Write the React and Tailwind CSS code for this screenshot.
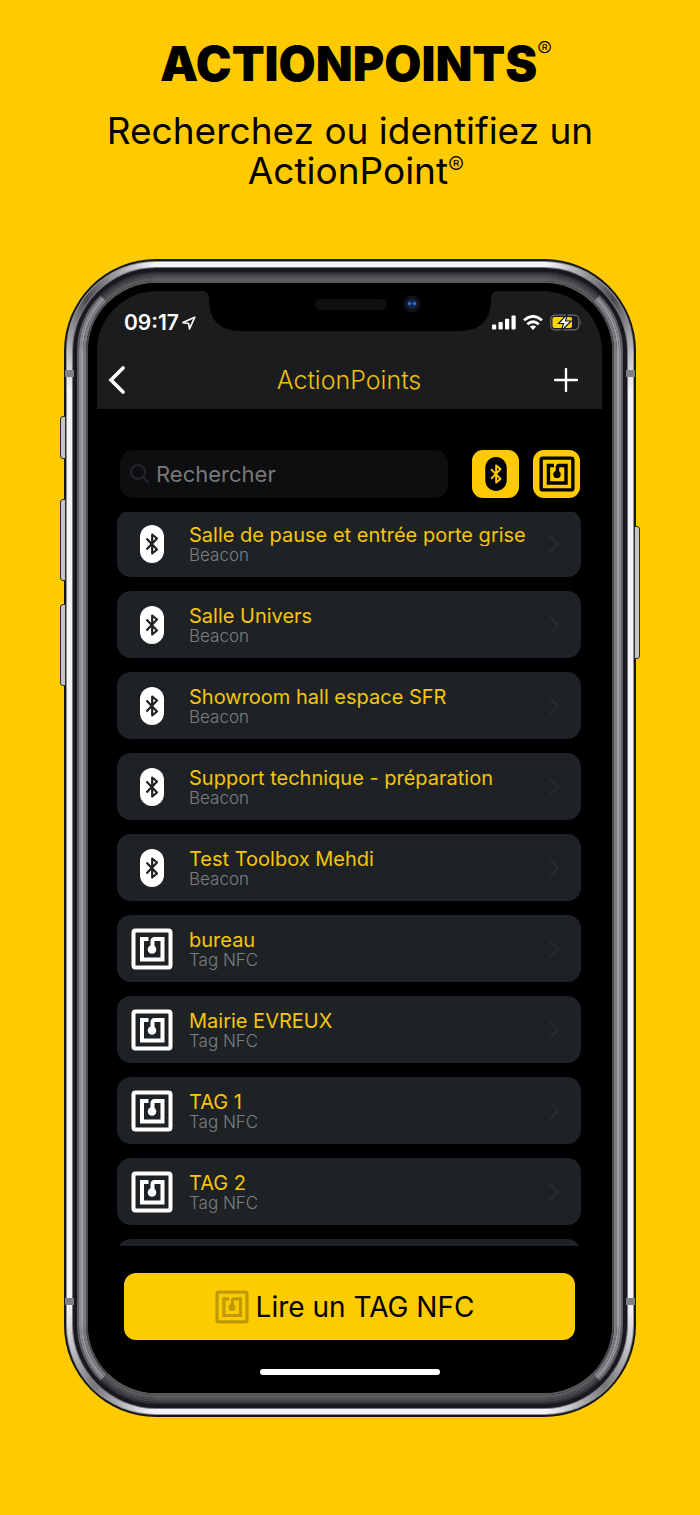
import React, { useState } from 'react';

const points = [
  { name: 'Salle de pause et entrée porte grise', type: 'Beacon' },
  { name: 'Salle Univers', type: 'Beacon' },
  { name: 'Showroom hall espace SFR', type: 'Beacon' },
  { name: 'Support technique - préparation', type: 'Beacon' },
  { name: 'Test Toolbox Mehdi', type: 'Beacon' },
  { name: 'bureau', type: 'Tag NFC' },
  { name: 'Mairie EVREUX', type: 'Tag NFC' },
  { name: 'TAG 1', type: 'Tag NFC' },
  { name: 'TAG 2', type: 'Tag NFC' },
];

// Metal and glass rings of the phone, from the outside in
const rings = [
  'p-[2px] bg-[#17171a] rounded-[92px]',
  'p-[1px] bg-[#8f9094] rounded-[90px]',
  'p-[5px] rounded-[89px] bg-[conic-gradient(#f4f4f6_0deg_19deg,#4a4a4d_26deg,#f4f4f6_32deg_149deg,#77777a_155deg,#f4f4f6_161deg_199deg,#77777a_205deg,#f4f4f6_211deg_328deg,#4a4a4d_334deg,#f4f4f6_341deg)]',
  'p-[1px] bg-[#77787c] rounded-[84px]',
  'p-[4px] bg-[#18191c] rounded-[83px]',
  'border-2 border-x-[#5d5e61] border-y-[#303134] rounded-[79px]',
  'border-2 border-x-[#8a8b8e] border-y-[#424346] rounded-[77px]',
  'border-2 border-x-[#9b9c9f] border-y-[#4e4f52] rounded-[75px]',
  'border-3 border-x-[#7b7c7f] border-y-[#5a5b5d] rounded-[73px]',
  'border-2 border-x-[#4c4d50] border-y-[#58595b] rounded-[70px]',
  'py-[8px] pr-[10px] pl-[9px] bg-black rounded-[68px]',
];

const BeaconIcon = ({ className, glyph }) => (
  <svg viewBox="0 0 24 38" className={className} aria-hidden="true">
    <rect width="24" height="38" rx="12" fill="currentColor" />
    <path d="M6.500 13.500 17 24.500 12.200 28.500V9.500l4.800 4L6.500 24.500" fill="none" stroke={glyph} strokeWidth="2.200" strokeLinejoin="round" />
  </svg>
);

const NfcIcon = ({ className }) => (
  <svg viewBox="0 0 42 42" className={className} fill="none" stroke="currentColor" aria-hidden="true">
    <rect x="2.500" y="2.500" width="37" height="37" rx="2" strokeWidth="4" />
    <path d="M17.500 11H11v20.500h20.500V11h-8q-2 0-2 2.500v7" strokeWidth="4" />
    <circle cx="21" cy="21.500" r="4.300" fill="currentColor" stroke="none" />
  </svg>
);

const PhoneFrame = ({ children }) =>
  rings.reduceRight((inner, ring) => <div className={ring}>{inner}</div>, children);

const StatusBar = () => (
  <div className="flex h-[61px] items-center justify-between pt-[2px] pr-[20px] pl-[27px] text-white">
    <div className="flex items-center gap-[3px]">
      <span className="text-[21px] leading-6 font-semibold">09:17</span>
      <svg viewBox="0 0 14 14" className="h-[14px] w-[14px]" fill="none" stroke="currentColor" strokeWidth="1.6" strokeLinejoin="round">
        <path d="M12.8 1.2 1 6.6l5.6.9.9 5.4z" />
      </svg>
    </div>
    <div className="flex items-center gap-[7px]">
      <svg viewBox="0 0 24 15" className="h-[15px] w-[24px]" fill="currentColor">
        <rect x="0" y="9.5" width="4.2" height="5" rx="1" />
        <rect x="6.5" y="7" width="4.2" height="7.5" rx="1" />
        <rect x="13" y="3.8" width="4.2" height="10.7" rx="1" />
        <rect x="19.5" y="0.5" width="4.2" height="14" rx="1" />
      </svg>
      <svg viewBox="0 0 20 15" className="h-[15px] w-[20px]" fill="none" stroke="currentColor" strokeWidth="2.8">
        <path d="M1 5.3q9-7.8 18 0M4.3 9.200q5.700-4.800 11.400 0" />
        <path d="M6.800 11.600q3.200-2.400 6.400 0L10 15z" fill="currentColor" stroke="none" />
      </svg>
      <svg viewBox="0 0 32 17" className="h-[17px] w-[32px]">
        <rect x="0.7" y="1.2" width="28" height="14.6" rx="4" fill="none" stroke="#696a6c" strokeWidth="1.2" />
        <path d="M30.300 6v5q2-2.500 0-5" fill="#696a6c" />
        <rect x="2.5" y="3" width="19.5" height="11" rx="2" fill="#fdd60a" />
        <path d="M17.500 0 8.500 9.500h5L11.300 17l9.700-10h-5.500z" fill="#fff" stroke="#1b1c1e" strokeWidth="1.200" />
      </svg>
    </div>
  </div>
);

const PointRow = ({ name, type }) => (
  <li>
    <button type="button" className="flex h-[67px] w-full items-center rounded-[14px] bg-[#1e2224] pr-[22px] pl-[14px] text-left">
      <span className="flex w-[42px] shrink-0 justify-center text-white">
        {type === 'Beacon' ? <BeaconIcon className="h-[38px] w-[24px]" glyph="#1e2224" /> : <NfcIcon className="h-[42px] w-[42px]" />}
      </span>
      <span className="ml-4 flex min-w-0 flex-1 flex-col">
        <span className="truncate text-[20px] leading-[22px] text-[#f5c60a]">{name}</span>
        <span className="text-[17px] leading-[18px] font-light text-[#7c7f82]">{type}</span>
      </span>
      <svg viewBox="0 0 10 18" className="h-[18px] w-[10px]" fill="none" stroke="#292c2f" strokeWidth="2">
        <path d="m1 1 8 8-8 8" />
      </svg>
    </button>
  </li>
);

const App = () => {
  const [query, setQuery] = useState('');

  const visible = points.filter((p) => p.name.toLowerCase().includes(query.toLowerCase()));

  return (
    <div className="min-h-screen bg-[#ffcb00] pb-[98px] font-['Inter',sans-serif] text-black">
      {/* Title */}
      <header className="flex h-[259px] flex-col items-center pt-[37px] text-center">
        <h1 className="pl-3 text-[48px] leading-[54px] font-black">
          ACTIONPOINTS<sup className="top-[-24px] text-[22px] leading-none font-light">®</sup>
        </h1>
        <p className="mt-[20px] text-[37px] leading-[40px]">
          Recherchez ou identifiez un
          <br />
          <span className="pl-3">
            ActionPoint<sup className="top-[-10px] text-[24px] leading-none font-light">®</sup>
          </span>
        </p>
      </header>

      {/* Phone */}
      <main className="relative mx-[64px]">
        <div className="absolute top-[157px] -left-[4px] h-[43px] w-[6px] rounded-l-[3px] border border-[#2b2b2e] bg-[#c5c5c8]" />
        <div className="absolute top-[240px] -left-[4px] h-[82px] w-[6px] rounded-l-[3px] border border-[#2b2b2e] bg-[#c5c5c8]" />
        <div className="absolute top-[345px] -left-[4px] h-[82px] w-[6px] rounded-l-[3px] border border-[#2b2b2e] bg-[#c5c5c8]" />
        <div className="absolute top-[267px] -right-[4px] h-[133px] w-[6px] rounded-r-[3px] border border-[#2b2b2e] bg-[#c5c5c8]" />

        <PhoneFrame>
          <div className="relative overflow-hidden rounded-[60px] bg-[#000002]">
            {/* Notch */}
            <svg viewBox="0 0 296 40" className="absolute top-0 left-1/2 h-[40px] w-[296px] -translate-x-1/2" aria-hidden="true">
              <path d="M0 0q7 0 7 8v4q2 28 32 28h218q30 0 32-28V8q0-8 7-8z" fill="#000" />
              <rect x="113" y="8" width="72" height="11" rx="5.5" fill="#0f0f11" />
              <circle cx="210" cy="13" r="8.5" fill="#111215" />
              <circle cx="210" cy="13" r="5" fill="#10264d" />
              <circle cx="207.5" cy="12.5" r="1.7" fill="#2f6fc0" />
              <circle cx="212.5" cy="12.5" r="1.7" fill="#2f6fc0" />
            </svg>

            <div className="bg-[#1b1c1e]">
              <StatusBar />
              <nav className="flex h-[57px] items-center justify-between pr-[24px] pb-[1px] pl-[11px]">
                <button type="button" aria-label="Retour" className="w-[28px] text-white">
                  <svg viewBox="0 0 18 28" className="h-[28px] w-[18px]" fill="none" stroke="currentColor" strokeWidth="3.6" strokeLinecap="round">
                    <path d="M15 2 3 14l12 12" />
                  </svg>
                </button>
                <h2 className="pl-2 text-[25px] leading-7 font-light text-[#ecc10c]">ActionPoints</h2>
                <button type="button" aria-label="Ajouter" className="text-white">
                  <svg viewBox="0 0 24 24" className="h-[24px] w-[24px]" fill="none" stroke="currentColor" strokeWidth="2.4" strokeLinecap="round">
                    <path d="M12 1v22M1 12h22" />
                  </svg>
                </button>
              </nav>
            </div>

            <div className="flex items-center pt-[41px] pr-[22px] pl-[23px]">
              <label className="flex h-[48px] min-w-0 flex-1 items-center gap-[6px] rounded-[13px] bg-[#0d0e10] pl-[10px]">
                <svg viewBox="0 0 20 20" className="h-[20px] w-[20px] shrink-0" fill="none" stroke="#25262c" strokeWidth="2">
                  <circle cx="8" cy="8" r="7" />
                  <path d="m13 13 6 6" />
                </svg>
                <input
                  type="text"
                  aria-label="Rechercher"
                  placeholder="Rechercher"
                  value={query}
                  onChange={(e) => setQuery(e.target.value)}
                  className="w-full min-w-0 bg-transparent text-[22px] leading-6 text-white outline-none placeholder:text-[#77787a]"
                />
              </label>
              <button type="button" aria-label="Beacons" className="ml-[24px] flex h-[48px] w-[47px] items-center justify-center rounded-[11px] bg-[#ffcb00]">
                <BeaconIcon className="h-[34px] w-[22px]" glyph="#ffcb00" />
              </button>
              <button type="button" aria-label="Tags NFC" className="ml-[14px] flex h-[48px] w-[47px] items-center justify-center rounded-[11px] bg-[#ffcb00]">
                <NfcIcon className="h-[36px] w-[36px]" />
              </button>
            </div>

            <div className="mr-[21px] ml-[20px] mt-[14px] overflow-hidden">
              <ul className="-mt-[2px] flex flex-col gap-[14px]">
                {visible.map((p) => (
                  <PointRow key={p.name} name={p.name} type={p.type} />
                ))}
              </ul>
              {/* Top edge of the next card */}
              <div className="mt-[14px] h-[7px] overflow-hidden">
                <div className="h-[67px] rounded-[14px] bg-[#1e2224]" />
              </div>
            </div>

            <div className="flex flex-col items-center px-[27px] pt-[27px] pb-[10px]">
              <button type="button" className="flex h-[67px] w-full items-center justify-center gap-[7px] rounded-[12px] bg-[#fdcc00] pr-[10px] text-[28px] leading-8">
                <NfcIcon className="h-[34px] w-[34px] text-[#c09a04]" />
                Lire un TAG NFC
              </button>
              <div className="mt-[29px] h-[6px] w-[180px] rounded-full bg-white" />
            </div>
          </div>
        </PhoneFrame>

        {/* Antenna bands */}
        <div className="absolute top-[111px] left-[1px] h-[7px] w-[9px] bg-[#808184]" />
        <div className="absolute top-[111px] right-[1px] h-[7px] w-[9px] bg-[#808184]" />
        <div className="absolute bottom-[112px] left-[1px] h-[7px] w-[9px] bg-[#808184]" />
        <div className="absolute right-[1px] bottom-[112px] h-[7px] w-[9px] bg-[#808184]" />
      </main>
    </div>
  );
};

export default App;
